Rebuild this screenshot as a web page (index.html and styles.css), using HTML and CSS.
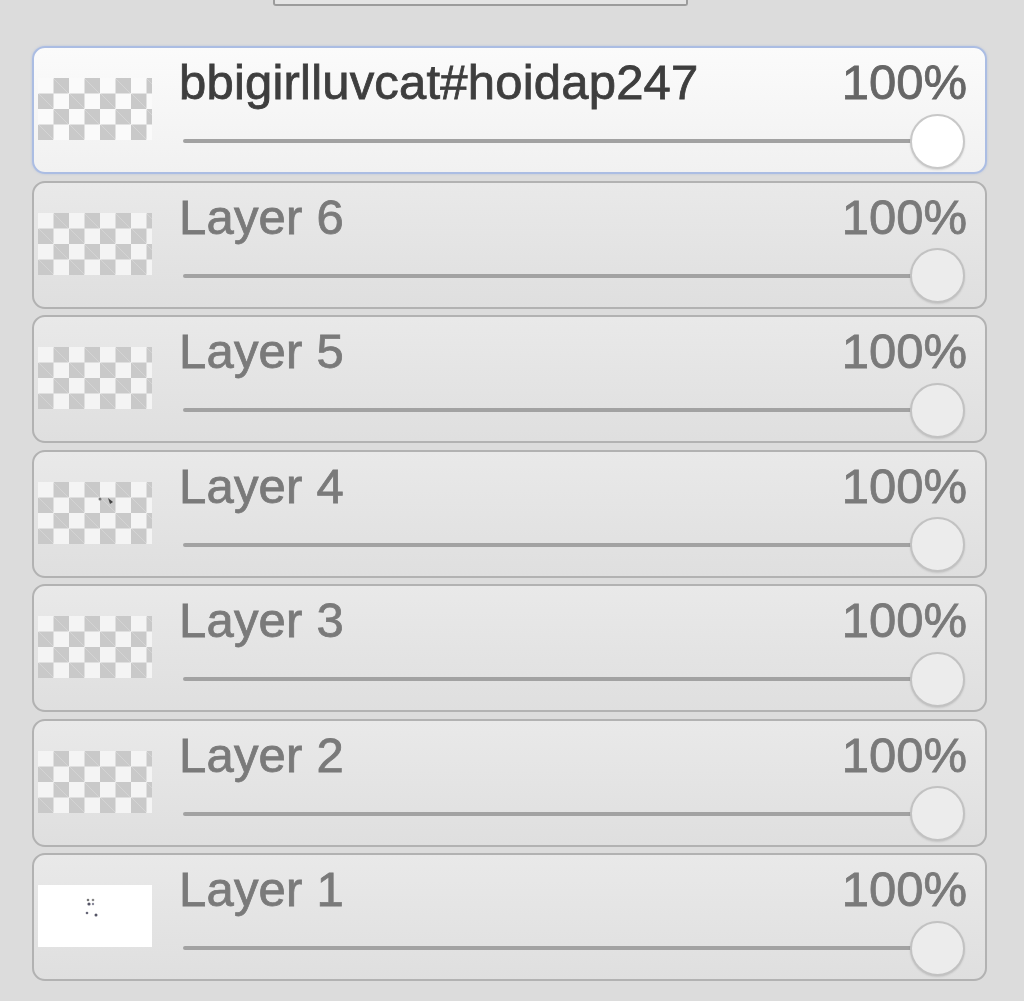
FILE: index.html
```html
<!DOCTYPE html>
<html lang="en">
  <head>
    <title>Layers</title>
    <link rel="stylesheet" href="styles.css">
  </head>
  <body>
    <div class="top-box"></div>
    <div class="layers">
      <div class="layer active">
        <div class="thumb"></div>
        <div class="info">
          <div class="head"><span class="name">bbigirlluvcat#hoidap247</span><span class="opacity">100%</span></div>
          <div class="slider"><div class="track"></div><div class="knob"></div></div>
        </div>
      </div>
      <div class="layer">
        <div class="thumb"></div>
        <div class="info">
          <div class="head"><span class="name">Layer 6</span><span class="opacity">100%</span></div>
          <div class="slider"><div class="track"></div><div class="knob"></div></div>
        </div>
      </div>
      <div class="layer">
        <div class="thumb"></div>
        <div class="info">
          <div class="head"><span class="name">Layer 5</span><span class="opacity">100%</span></div>
          <div class="slider"><div class="track"></div><div class="knob"></div></div>
        </div>
      </div>
      <div class="layer">
        <div class="thumb">
          <svg width="114" height="62" viewBox="0 0 114 62">
            <circle cx="62" cy="17" r="1.5" fill="#777"/>
            <path d="M70 16 L75 20 L72 22 Z" fill="#444"/>
          </svg>
        </div>
        <div class="info">
          <div class="head"><span class="name">Layer 4</span><span class="opacity">100%</span></div>
          <div class="slider"><div class="track"></div><div class="knob"></div></div>
        </div>
      </div>
      <div class="layer">
        <div class="thumb"></div>
        <div class="info">
          <div class="head"><span class="name">Layer 3</span><span class="opacity">100%</span></div>
          <div class="slider"><div class="track"></div><div class="knob"></div></div>
        </div>
      </div>
      <div class="layer">
        <div class="thumb"></div>
        <div class="info">
          <div class="head"><span class="name">Layer 2</span><span class="opacity">100%</span></div>
          <div class="slider"><div class="track"></div><div class="knob"></div></div>
        </div>
      </div>
      <div class="layer">
        <div class="thumb blank">
          <svg width="114" height="62" viewBox="0 0 114 62">
            <circle cx="50" cy="15" r="1.3" fill="#777"/>
            <circle cx="55" cy="15" r="1.3" fill="#888"/>
            <circle cx="51" cy="19" r="1.6" fill="#556"/>
            <circle cx="55" cy="19" r="1.2" fill="#889"/>
            <circle cx="49" cy="28" r="1.3" fill="#667"/>
            <circle cx="58" cy="30" r="1.5" fill="#556"/>
          </svg>
        </div>
        <div class="info">
          <div class="head"><span class="name">Layer 1</span><span class="opacity">100%</span></div>
          <div class="slider"><div class="track"></div><div class="knob"></div></div>
        </div>
      </div>
    </div>
  </body>
</html>
```

FILE: styles.css
```css
html {
  font-family: "Liberation Sans", Arial, sans-serif;
}

body {
  margin: 0;
  height: 1001px;
  background: #dcdcdc;
  overflow: hidden;
}

.top-box {
  margin-left: 273px;
  width: 415px;
  height: 6px;
  box-sizing: border-box;
  border: 2px solid #9c9c9c;
  border-top: none;
  border-radius: 0 0 3px 3px;
  background: #e4e4e4;
}

.layers {
  display: flex;
  flex-flow: column;
  gap: 6.5px;
  margin-top: 40px;
  margin-left: 32px;
  width: 955px;
}

.layer {
  display: flex;
  flex-flow: row;
  height: 128px;
  box-sizing: border-box;
  padding: 0 18px 0 4px;

  border: 2px solid #b2b2b2;
  border-radius: 13px;
  background: linear-gradient(#e9e9e9, #dfdfdf);
}

.layer.active {
  border-color: #abbde3;
  background: linear-gradient(#fbfbfb, #f1f1f1);
  box-shadow: 0 0 2px rgba(140, 165, 220, 0.5);
}

.thumb {
  width: 114px;
  height: 62px;
  margin-top: 30px;
  flex: none;
  background-color: #f4f4f4;
  background-image:
    linear-gradient(45deg, #c9c9c9 25%, transparent 25%, transparent 75%, #c9c9c9 75%),
    linear-gradient(45deg, #c9c9c9 25%, transparent 25%, transparent 75%, #c9c9c9 75%);
  background-size: 31px 31px;
  background-position: 0 0, 15.5px 15.5px;
}

.active .thumb {
  background-color: #fafafa;
}

.thumb.blank {
  background: #ffffff;
}

.thumb svg {
  display: block;
}

.info {
  flex: 1;
  margin-left: 27px;
}

.head {
  display: flex;
  flex-flow: row;
  justify-content: space-between;
  margin-top: 6px;
  height: 56px;
  line-height: 56px;
  font-size: 49px;
  color: #7a7a7a;
  -webkit-text-stroke: 0.8px currentColor;
}

.name {
  letter-spacing: 0.2px;
}

.active .head .name {
  color: #3e3e3e;
}

.active .head .opacity {
  color: #666;
}

.slider {
  display: flex;
  flex-flow: row;
  align-items: center;
  margin-top: 4px;
  margin-right: 2px;
  height: 54px;
}

.track {
  flex: 1;
  height: 4px;
  margin-left: 4px;
  margin-right: -2px;
  background: #a2a2a2;
  border-radius: 2px;
}

.knob {
  width: 55px;
  height: 55px;
  box-sizing: border-box;
  border: 2px solid #c2c2c2;
  border-radius: 50%;
  background: #ececec;
  box-shadow: 0 1px 2px rgba(0, 0, 0, 0.12);
}

.active .knob {
  background: #ffffff;
  border-color: #c8c8c8;
}
```
